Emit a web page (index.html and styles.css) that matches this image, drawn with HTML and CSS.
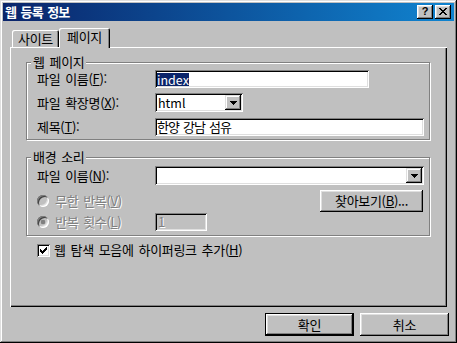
FILE: index.html
```html
<!DOCTYPE html>
<html lang="ko">
<head>
<meta charset="utf-8">
<title>웹 등록 정보</title>
<link rel="stylesheet" href="styles.css">
</head>
<body>
<div class="window">
  <div class="titlebar">
    <span class="title">웹 등록 정보</span>
    <div class="tb-buttons">
      <span class="tb-btn q">?</span>
      <span class="tb-btn"><svg width="8" height="7" viewBox="0 0 8 7"><path d="M0 0h2v1h-2z M6 0h2v1h-2z M1 1h2v1h-2z M5 1h2v1h-2z M2 2h4v1h-4z M3 3h2v1h-2z M2 4h4v1h-4z M1 5h2v1h-2z M5 5h2v1h-2z M0 6h2v1h-2z M6 6h2v1h-2z" fill="#000"/></svg></span>
    </div>
  </div>
  <div class="content">
    <div class="tabs">
      <div class="tab">사이트</div>
      <div class="tab active">페이지</div>
    </div>
    <div class="panel">
      <div class="group g1">
        <span class="legend">웹 페이지</span>
        <div class="row r18">
          <span class="lbl">파일 이름(<u>F</u>):</span>
          <div class="edit w-name"><span class="sel">index</span></div>
        </div>
        <div class="row r19 gap5">
          <span class="lbl">파일 확장명(<u>X</u>):</span>
          <div class="combo w-ext"><span class="combo-text">html</span><span class="dd"><svg width="7" height="4" viewBox="0 0 7 4"><path d="M0 0h7v1h-1v1h-1v1h-1v1h-1v-1h-1v-1h-1v-1h-1z" fill="#000"/></svg></span></div>
        </div>
        <div class="row r18 gap6">
          <span class="lbl">제목(<u>T</u>):</span>
          <div class="edit w-full"><span class="val">한양 강남 섬유</span></div>
        </div>
      </div>
      <div class="group g2">
        <span class="legend">배경 소리</span>
        <div class="row r19">
          <span class="lbl">파일 이름(<u>N</u>):</span>
          <div class="combo w-full"><span class="combo-text"></span><span class="dd"><svg width="7" height="4" viewBox="0 0 7 4"><path d="M0 0h7v1h-1v1h-1v1h-1v1h-1v-1h-1v-1h-1v-1h-1z" fill="#000"/></svg></span></div>
        </div>
        <div class="row r22 gap5 spread">
          <span class="radio-label"><span class="radio"></span><span>무한 반복(<u>V</u>)</span></span>
          <span class="btn browse"><span>찾아보기(<u>B</u>)...</span></span>
        </div>
        <div class="row r18 gap1">
          <span class="radio-label"><span class="radio checked"></span><span>반복 횟수(<u>L</u>)</span></span>
          <div class="edit disabled"><span>1</span></div>
        </div>
      </div>
      <div class="check-row">
        <span class="checkbox"><svg width="7" height="7" viewBox="0 0 7 7"><path d="M0.5 2v3M1.5 3v3M2.5 4v3M3.5 3v3M4.5 2v3M5.5 1v3M6.5 0v3" stroke="#000" stroke-width="1" fill="none"/></svg></span>
        <span>웹 탐색 모음에 하이퍼링크 추가(<u>H</u>)</span>
      </div>
    </div>
    <div class="footer">
      <span class="btn dlg default">확인</span>
      <span class="btn dlg">취소</span>
    </div>
  </div>
</div>
</body>
</html>
```
FILE: styles.css
```css
body {
  margin: 0;
  background: #c0c0c0;
  font: 13px/14px "Noto Sans CJK KR", "Noto Sans", sans-serif;
  letter-spacing: -0.3px;
  word-spacing: 1.5px;
  color: #000;
}

.window {
  width: 457px;
  height: 343px;
  box-sizing: border-box;
  padding: 3px;
  background: #c0c0c0;
  box-shadow: inset -1px -1px #000, inset 1px 1px #dfdfdf, inset -2px -2px #808080, inset 2px 2px #fff;
}

.titlebar {
  height: 18px;
  display: flex;
  align-items: center;
  justify-content: space-between;
  padding: 0 3px 0 2px;
  background: linear-gradient(90deg, #0a246a, #1084d0);
  color: #fff;
  font-weight: bold;
}

.title { line-height: 18px; letter-spacing: -0.8px; }

.tb-buttons { display: flex; gap: 2px; }

.tb-btn {
  width: 16px;
  height: 14px;
  box-sizing: border-box;
  background: #c0c0c0;
  box-shadow: inset -1px -1px #000, inset 1px 1px #fff, inset -2px -2px #808080, inset 2px 2px #dfdfdf;
  display: flex;
  align-items: center;
  justify-content: center;
  color: #000;
  font: bold 11px/1 "Liberation Sans", sans-serif;
  letter-spacing: 0;
}

.tb-btn svg { display: block; margin-top: -1px; }
.tb-btn.q { padding-bottom: 1px; }

.content { padding: 7px 7px 0; }

.tabs {
  display: flex;
  align-items: flex-end;
  padding-left: 2px;
}

.tab {
  width: 47px;
  height: 17px;
  box-sizing: border-box;
  text-align: center;
  line-height: 17px;
  background: #c0c0c0;
  border-radius: 2px 2px 0 0;
  box-shadow: inset 1px 1px #fff, inset -1px 0 #000, inset -2px 0 #808080;
}

.tab.active {
  width: 51px;
  height: 20px;
  padding-bottom: 3px;
  margin-bottom: -1px;
  position: relative;
  z-index: 1;
}

.panel {
  height: 260px;
  box-sizing: border-box;
  padding: 15px 17px 0 16px;
  box-shadow: inset 1px 1px #fff, inset -1px -1px #000, inset -2px -2px #808080;
}

.group {
  position: relative;
  border: 1px solid #808080;
  box-shadow: inset 1px 1px #fff, 1px 1px #fff;
}

.legend {
  position: absolute;
  top: -8px;
  left: 4px;
  padding: 0 2px;
  background: #c0c0c0;
  line-height: 14px;
}

.g1 { padding: 7px 5px 3px 10px; }
.g2 { margin-top: 17px; padding: 8px 5px 4px 10px; }

.row { display: flex; align-items: center; }
.r18 { height: 18px; }
.r19 { height: 19px; }
.r22 { height: 22px; }
.gap1 { margin-top: 1px; }
.gap5 { margin-top: 5px; }
.gap6 { margin-top: 6px; }
.spread { justify-content: space-between; }

.lbl { width: 118px; flex: none; }

.edit {
  box-sizing: border-box;
  height: 18px;
  background: #fff;
  box-shadow: inset 1px 1px #808080, inset -1px -1px #fff, inset 2px 2px #000, inset -2px -2px #dfdfdf;
  padding: 0 2px;
  display: flex;
  align-items: center;
  white-space: nowrap;
}

.val { letter-spacing: -1px; }

.w-name { width: 214px; }
.w-full { width: 269px; }
.w-ext { width: 88px; }

.sel {
  display: inline-block;
  line-height: 13px;
  background: #0a246a;
  color: #fff;
  font-size: 12.5px;
  letter-spacing: 0;
}

.combo {
  box-sizing: border-box;
  height: 19px;
  background: #fff;
  box-shadow: inset 1px 1px #808080, inset -1px -1px #fff, inset 2px 2px #000, inset -2px -2px #dfdfdf;
  padding: 2px;
  display: flex;
  justify-content: space-between;
  align-items: stretch;
}

.combo-text { padding-left: 1px; line-height: 15px; font-size: 12.5px; letter-spacing: 0; }

.dd {
  width: 16px;
  box-sizing: border-box;
  background: #c0c0c0;
  box-shadow: inset -1px -1px #000, inset 1px 1px #dfdfdf, inset -2px -2px #808080, inset 2px 2px #fff;
  display: flex;
  align-items: center;
  justify-content: center;
}

.dd svg { display: block; }

.btn {
  box-sizing: border-box;
  background: #c0c0c0;
  box-shadow: inset -1px -1px #000, inset 1px 1px #fff, inset -2px -2px #808080, inset 2px 2px #dfdfdf;
  display: flex;
  align-items: center;
  justify-content: center;
}

.browse { width: 103px; height: 22px; margin-right: 1px; }

.radio-label {
  display: flex;
  align-items: center;
  gap: 6px;
  width: 118px;
  flex: none;
  color: #808080;
  text-shadow: 1px 1px #fff;
}

.radio {
  width: 12px;
  height: 12px;
  flex: none;
  box-sizing: border-box;
  border-radius: 50%;
  background: #c0c0c0;
  box-shadow: inset 1px 1px #808080, inset -1px -1px #fff, inset 2px 2px #404040, inset -2px -2px #dfdfdf;
}

.radio.checked {
  background: radial-gradient(circle, #808080 0 2px, #c0c0c0 2.6px);
}

.edit.disabled {
  width: 52px;
  background: #c0c0c0;
  color: #808080;
  text-shadow: 1px 1px #fff;
  padding-left: 3px;
}

.check-row {
  display: flex;
  align-items: center;
  gap: 4px;
  height: 14px;
  margin: 7px 0 0 11px;
}

.checkbox {
  width: 13px;
  height: 13px;
  flex: none;
  box-sizing: border-box;
  background: #fff;
  box-shadow: inset 1px 1px #808080, inset -1px -1px #fff, inset 2px 2px #000, inset -2px -2px #dfdfdf;
  padding: 3px;
}

.checkbox svg { display: block; }

.footer {
  display: flex;
  justify-content: flex-end;
  gap: 6px;
  margin: 6px -2px 0 0;
}

.dlg { width: 89px; height: 23px; }

.dlg.default {
  box-shadow: inset 0 0 0 1px #000, inset -2px -2px #000, inset 2px 2px #fff, inset -3px -3px #808080, inset 3px 3px #dfdfdf;
}
```
